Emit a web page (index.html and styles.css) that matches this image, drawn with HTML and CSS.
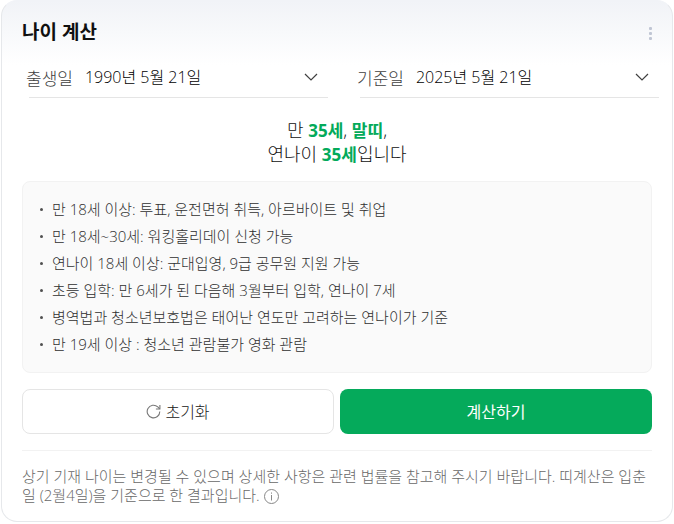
FILE: index.html
```html
<!DOCTYPE html>
<html lang="ko">
<head>
    <meta charset="UTF-8">
    <meta name="viewport" content="width=device-width, initial-scale=1.0">
    <title>나이 계산</title>
    <link rel="stylesheet" href="styles.css">
</head>
<body>
    <section class="card">
        <header class="card-header">
            <h2 class="title">나이 계산</h2>
            <button type="button" class="more-btn" aria-label="더보기">
                <svg width="3" height="13" viewBox="0 0 3 13" fill="#c0c6d4">
                    <rect width="3" height="3" rx="1"/>
                    <rect y="5" width="3" height="3" rx="1"/>
                    <rect y="10" width="3" height="3" rx="1"/>
                </svg>
            </button>
        </header>

        <form class="age-form">
            <div class="date-group">
                <div class="date-field">
                    <label for="birth">출생일</label>
                    <select id="birth">
                        <option>1990년 5월 21일</option>
                    </select>
                    <svg class="arrow" width="14" height="8" viewBox="0 0 14 8" fill="none" stroke="#404040" stroke-width="1.2">
                        <path d="M1 1l6 6 6-6"/>
                    </svg>
                </div>
                <div class="date-field">
                    <label for="base">기준일</label>
                    <select id="base">
                        <option>2025년 5월 21일</option>
                    </select>
                    <svg class="arrow" width="14" height="8" viewBox="0 0 14 8" fill="none" stroke="#404040" stroke-width="1.2">
                        <path d="M1 1l6 6 6-6"/>
                    </svg>
                </div>
            </div>

            <p class="result">
                만 <strong>35세</strong>, <strong>말띠</strong>,<br>
                연나이 <strong>35세</strong>입니다
            </p>

            <ul class="info-list">
                <li>만 18세 이상: 투표, 운전면허 취득, 아르바이트 및 취업</li>
                <li>만 18세~30세: 워킹홀리데이 신청 가능</li>
                <li>연나이 18세 이상: 군대입영, 9급 공무원 지원 가능</li>
                <li>초등 입학: 만 6세가 된 다음해 3월부터 입학, 연나이 7세</li>
                <li>병역법과 청소년보호법은 태어난 연도만 고려하는 연나이가 기준</li>
                <li>만 19세 이상 : 청소년 관람불가 영화 관람</li>
            </ul>

            <div class="btn-group">
                <button type="reset" class="btn reset-btn">
                    <svg width="15" height="15" viewBox="0 0 15 15" fill="none" stroke="#777" stroke-width="1.1">
                        <path d="M13.8 7.5a6.3 6.3 0 1 1-2-4.6l1.9 2"/>
                        <path d="M13.9 1v4h-4"/>
                    </svg>
                    초기화
                </button>
                <button type="button" class="btn submit-btn">계산하기</button>
            </div>
        </form>

        <p class="notice">
            상기 기재 나이는 변경될 수 있으며 상세한 사항은 관련 법률을 참고해 주시기 바랍니다. 띠계산은 입춘일 (2월4일)을 기준으로 한 결과입니다.
            <button type="button" class="info-btn" aria-label="도움말">
                <svg width="15" height="15" viewBox="0 0 15 15" fill="none" stroke="#888">
                    <circle cx="7.5" cy="7.5" r="7"/>
                    <path d="M7.5 6v5.5M7.5 3.5v1.2"/>
                </svg>
            </button>
        </p>
    </section>
</body>
</html>
```
FILE: styles.css
```css
* {
    box-sizing: border-box;
}

body {
    margin: 0 1px;
    background-color: #fff;
    font-family: "Open Sans", "Noto Sans CJK KR", sans-serif;
    font-weight: 300;
    color: #101010;
}

button, select {
    font-family: inherit;
    font-weight: inherit;
    cursor: pointer;
}

.card {
    padding: 0 20px 16px;
    border: 1px solid #e6e8eb;
    border-top-color: #f1f3f7;
    border-radius: 16px;
    background: linear-gradient(#f1f3f7, #fff 64px);
}

.card-header {
    display: flex;
    align-items: center;
    justify-content: space-between;
    height: 62px;
}

.title {
    margin: 0;
    font-size: 19px;
    line-height: 24px;
}

.more-btn {
    display: flex;
    padding: 2px 0 0;
    border: none;
    background: none;
}

.date-group {
    display: grid;
    grid-template-columns: 1fr 1fr;
    gap: 32px;
    margin: 0 -7px 0 7px;
}

.date-field {
    display: flex;
    align-items: center;
    height: 35px;
    padding-bottom: 6px;
    padding-right: 10px;
    border-bottom: 1px solid #e5e5e5;
    font-size: 17px;
}

.date-field label {
    margin-left: -3px;
    color: #404040;
}

.date-field select {
    flex: 1;
    min-width: 0;
    margin-left: 12px;
    padding: 0;
    border: none;
    background: none;
    appearance: none;
    color: #000;
    font-size: 16px;
}

.arrow {
    flex: none;
    pointer-events: none;
}

.result {
    margin: 20px 0 15px;
    text-align: center;
    font-size: 18px;
    line-height: 24px;
}

.result strong {
    color: #03aa5a;
    font-size: 17px;
    font-weight: 700;
    line-height: 1;
}

.info-list {
    margin: 0;
    padding: 14px 17px;
    border: 1px solid #f2f2f2;
    border-radius: 8px;
    background-color: #fafafa;
    list-style: none;
    color: #303030;
    font-size: 15px;
    line-height: 27px;
}

.info-list li {
    display: flex;
    align-items: center;
    gap: 9px;
}

.info-list li::before {
    content: "";
    width: 3px;
    height: 3px;
    border-radius: 50%;
    background-color: #505050;
}

.btn-group {
    display: grid;
    grid-template-columns: 1fr 1fr;
    gap: 6px;
    margin-top: 16px;
}

.btn {
    display: flex;
    align-items: center;
    justify-content: center;
    gap: 4px;
    height: 45px;
    padding-bottom: 2px;
    border-radius: 8px;
    font-size: 16px;
}

.reset-btn {
    border: 1px solid #e5e5e5;
    background-color: #fff;
    color: #202020;
}

.submit-btn {
    border: none;
    background-color: #05aa5b;
    color: #fff;
    font-weight: 400;
}

.notice {
    margin: 16px 0 0;
    padding-top: 16px;
    border-top: 1px solid #f2f2f2;
    color: #686868;
    font-size: 15px;
    line-height: 19px;
    word-break: break-all;
}

.info-btn {
    padding: 0;
    border: none;
    background: none;
    line-height: 0;
    vertical-align: middle;
}
```
